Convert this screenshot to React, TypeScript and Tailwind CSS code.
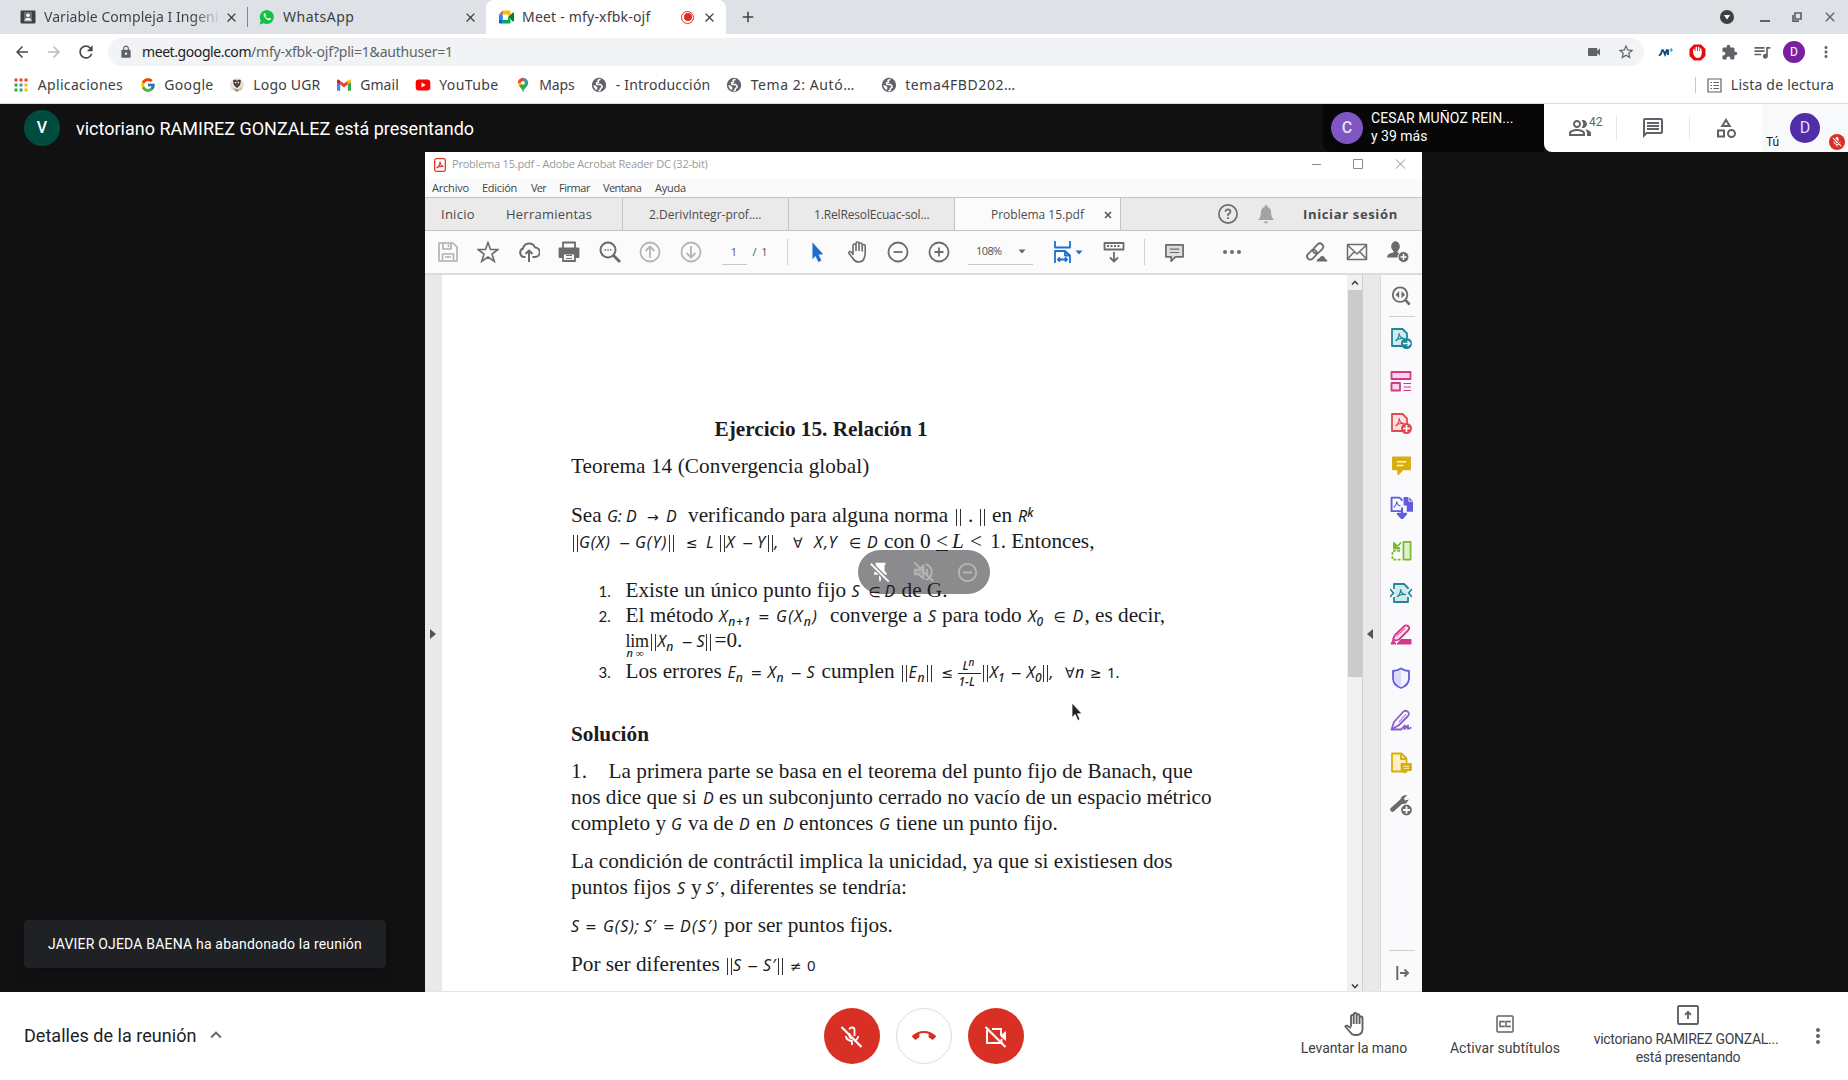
import type { ReactNode } from "react";
import {
  MdAdd, MdArrowBack, MdArrowForward, MdCallEnd, MdClose, MdExpandLess, MdExtension, MdLock, MdMicOff, MdMoreVert,
  MdOutlineCategory, MdOutlineMessage, MdOutlinePeopleAlt, MdQueueMusic, MdRefresh, MdRemoveCircleOutline,
  MdStarBorder, MdVideocam,
} from "react-icons/md";
import { FcGoogle } from "react-icons/fc";

/* ---------- browser icons ---------- */

const Whatsapp = () => (
  <svg width="16" height="16" viewBox="0 0 16 16">
    <path d="M.6 15.4 1.7 11.5A7 7 0 1 1 4.6 14.3Z" fill="#12c143" />
    <path d="M5.3 4.2c-.9.7-1 1.900.1 3.500 1.300 2 3 3.300 4.700 3.600 1 .1 1.900-.8 1.800-1.600L10.200 8.800 9.200 9.800C8 9.300 7 8.300 6.400 7.200L7 6.300 6.300 4.300Z" fill="#fff" />
  </svg>
);
const MeetLogo = () => (
  <svg width="17" height="16" viewBox="0 0 17 16">
    <path d="M1 5.500 4.800 1.500V5.500Z" fill="#ea4335" />
    <path d="M1 5.500H4.800V11H1Z" fill="#2684fc" />
    <path d="M1 11H4.800V14.500H2A1 1 0 0 1 1 13.500Z" fill="#0066da" />
    <path d="M4.800 1.500H11.500A1 1 0 0 1 12.500 2.500V5.500L10 8V5.500H4.800Z" fill="#ffba00" />
    <path d="M4.800 11H10V8L12.500 11V13.500A1 1 0 0 1 11.500 14.500H4.800Z" fill="#00ac47" />
    <path d="M10 8 15 3.500Q16 3 16 4V12Q16 13 15 12.500Z" fill="#00832d" />
  </svg>
);
const Contact = () => (
  <svg width="16" height="16" viewBox="0 0 16 16">
    <rect x=".5" y="1.500" width="15" height="13" rx="1" fill="#3c4043" />
    <rect x="4" y="3" width="8" height="10" fill="#fff" opacity=".25" />
    <circle cx="8" cy="6.300" r="1.800" fill="#fff" />
    <path d="M4.500 11.500Q5 9 8 9T11.500 11.500Z" fill="#fff" />
  </svg>
);
const Apps = () => (
  <svg width="16" height="16" viewBox="0 0 16 16">
    {["#ea4335", "#ea4335", "#ea4335", "#34a853", "#4285f4", "#fbbc04", "#34a853", "#34a853", "#fbbc04"].map((c, i) => (
      <rect key={i} x={1.500 + (i % 3) * 5} y={1.500 + Math.floor(i / 3) * 5} width="3" height="3" fill={c} />
    ))}
  </svg>
);
const Crest = () => (
  <svg width="16" height="16" viewBox="0 0 16 16">
    <circle cx="8" cy="8" r="7" fill="#e6e1da" />
    <path d="M4 3.500 6.500 2.500 8 4 9.500 2.500 12 3.500 11 8 8 11 5 8Z" fill="#3a3130" />
    <circle cx="6.600" cy="5.500" r=".9" fill="#f3ead2" />
    <circle cx="9.400" cy="5.500" r=".9" fill="#f3ead2" />
    <path d="M7.300 7H8.700L8 9Z" fill="#e08a2a" />
    <path d="M4 11 8 15 11 12 8 12.500Z" fill="#8a8f6c" />
    <path d="M11 10 13 11 11 13.500Z" fill="#e3c13a" />
  </svg>
);
const Gmail = () => (
  <svg width="16" height="16" viewBox="0 0 16 16">
    <path d="M1 4V13A.8.8 0 0 0 1.800 13.800H4.200V7Z" fill="#4285f4" />
    <path d="M15 4V13A.8.8 0 0 1 14.200 13.800H11.800V7Z" fill="#34a853" />
    <path d="M4.200 7.500V3.700L8 6.500 11.800 3.700V7.500L8 10.400Z" fill="#ea4335" />
    <path d="M11.800 3.700 13.200 2.700Q15 2 15 4V5.200L11.800 7.600Z" fill="#fbbc04" />
    <path d="M4.200 3.700 2.800 2.700Q1 2 1 4V5.200L4.200 7.600Z" fill="#c5221f" />
  </svg>
);
const Youtube = () => (
  <svg width="16" height="16" viewBox="0 0 16 16">
    <rect x=".7" y="2.500" width="14.600" height="11" rx="3" fill="#f00" />
    <path d="M6.500 5.500V10.500L10.800 8Z" fill="#fff" />
  </svg>
);
const MapsPin = () => (
  <svg width="16" height="16" viewBox="0 0 16 16">
    <path d="M2.800 6A5.200 5.200 0 0 1 8 .8V6Z" fill="#ea4335" />
    <path d="M8 .8A5.200 5.200 0 0 1 13.200 6H8Z" fill="#4285f4" />
    <path d="M13.200 6C13.200 9.500 9 11 8 15.500 7.600 12 5.500 11 4 9L10 3Z" fill="#34a853" />
    <path d="M2.800 6Q3 8 4.200 9.400L8 5Z" fill="#fbbc04" />
    <circle cx="8" cy="5.800" r="1.900" fill="#fff" />
  </svg>
);
const Globe = () => (
  <svg width="16" height="16" viewBox="0 0 16 16">
    <circle cx="8" cy="8" r="7.200" fill="#5f6368" />
    <path d="M9.500 2.300 7 3.500 7.500 5 5.500 6 6 7.500H9.500L11 9V10.500L9.500 11.500 9 13.500 7.500 14" fill="none" stroke="#fff" strokeWidth="1.500" />
    <path d="M2 8.200 4.500 8.500 6.500 10.500 6 13 4 12Z" fill="#fff" />
  </svg>
);

const CHROME = "font-['Noto_Sans',sans-serif] text-[14px] leading-none whitespace-nowrap text-[#3c4043]";

function TabStrip() {
  return (
    <div className={`flex h-[34px] shrink-0 bg-[#dee1e6] ${CHROME}`}>
      <div className="flex w-[247px] items-center pl-5">
        <Contact />
        <span className="ml-2 w-[176px] overflow-hidden bg-gradient-to-r from-[#3c4043] from-85% to-[#dee1e6] bg-clip-text leading-5 tracking-[0.05px] text-transparent">Variable Compleja I Ingeni</span>
        <MdClose className="ml-1 size-[15px]" />
      </div>
      <div className="flex w-[239px] items-center">
        <div className="h-5 w-px bg-[#80868b]" />
        <span className="ml-[11px]"><Whatsapp /></span>
        <span className="ml-2 w-[180px] tracking-[0.5px]">WhatsApp</span>
        <MdClose className="size-[15px]" />
      </div>
      <div className="flex w-[240px] items-center rounded-t-lg bg-white pl-3">
        <MeetLogo />
        <span className="ml-[7px] w-[159px] tracking-[0.2px]">Meet - mfy-xfbk-ojf</span>
        <span className="flex size-[13px] items-center justify-center rounded-full border-[1.5px] border-[#d93025]"><i className="size-2 rounded-full bg-[#d93025]" /></span>
        <MdClose className="ml-[8px] size-[15px]" />
      </div>
      <div className="flex items-center pl-[13px]"><MdAdd className="size-[18px]" /></div>
      <div className="ml-auto flex items-center text-[#5f6368]">
        <svg width="14" height="14" viewBox="0 0 14 14"><circle cx="7" cy="7" r="7" fill="#3c4043" /><path d="M3.800 5H10.200L7 9.500Z" fill="#fff" /></svg>
        <i className="mt-2 ml-[26px] h-0.5 w-[10px] bg-[#5f6368]" />
        <svg className="ml-[22px]" width="10" height="10" viewBox="0 0 10 10" fill="none" stroke="#5f6368" strokeWidth="1.700"><path d="M3 1H9V7H3ZM1 3V9.200H7" /></svg>
        <MdClose className="mr-[10px] ml-[20px] size-4" />
      </div>
    </div>
  );
}

function AddressBar() {
  return (
    <div className={`flex h-9 shrink-0 items-center bg-white pl-[13px] ${CHROME} text-[#5f6368]`}>
      <MdArrowBack className="size-[18px] text-[#46494d]" />
      <MdArrowForward className="ml-[14px] size-[18px] text-[#babcbe]" />
      <MdRefresh className="ml-[13px] size-5 text-[#46494d]" />
      <div className="ml-3 flex h-7 w-[1536px] items-center rounded-full bg-[#f1f3f4] pl-[11px]">
        <MdLock className="size-[14px]" />
        <span className="ml-[9px] w-[109px] tracking-[-0.42px] text-[#202124]">meet.google.com</span>
        <span className="tracking-[-0.2px]">/mfy-xfbk-ojf?pli=1&amp;authuser=1</span>
        <MdVideocam className="ml-auto size-4" />
        <MdStarBorder className="mr-[9px] ml-[15px] size-[18px]" />
      </div>
      <svg className="ml-[14px]" width="15" height="10" viewBox="0 0 15 10" fill="none" stroke="#0b4a80" strokeWidth="1.900"><path d="M1 7.500Q2.500 9 3.500 5T6 5L7 7.500 9 3Q10.500 2 10 8" /><path d="M11.500 3H15M13.200 1.200V4.800" stroke="#1b9ad6" strokeWidth="1.100" /></svg>
      <svg className="ml-[16px]" width="17" height="17" viewBox="0 0 17 17"><path d="M5 .5H12L16.500 5V12L12 16.500H5L.5 12V5Z" fill="#e40d0d" /><path d="M5 8V5.500M7.300 8V3.500M9.600 8V3.500M11.800 9V5" stroke="#fff" strokeWidth="1.500" strokeLinecap="round" /><path d="M4.300 7H12.500V10.500Q12 14 8.500 14 6 14 4.300 10Z" fill="#fff" /></svg>
      <MdExtension className="ml-[15px] size-[17px]" />
      <MdQueueMusic className="ml-[14px] size-5" />
      <span className="ml-[11px] flex size-[22px] items-center justify-center rounded-full bg-[#7b1fa2] font-[Roboto] text-[12px] text-white">D</span>
      <MdMoreVert className="ml-[12px] size-[18px]" />
    </div>
  );
}

function Bookmark({ icon, children, className }: { icon: ReactNode; children: ReactNode; className: string }) {
  return (
    <div className={`flex shrink-0 items-center gap-[8.5px] ${className}`}>
      {icon}
      <span>{children}</span>
    </div>
  );
}

function BookmarksBar() {
  return (
    <div className={`flex h-[34px] shrink-0 items-center border-b border-[#dadce0] bg-white pb-[3px] pl-[13.25px] ${CHROME}`}>
      <Bookmark icon={<Apps />} className="w-[126.5px] tracking-[0.33px]">Aplicaciones</Bookmark>
      <Bookmark icon={<FcGoogle className="size-4" />} className="w-[89px] tracking-[0.35px]">Google</Bookmark>
      <Bookmark icon={<Crest />} className="w-[107px] tracking-[0.19px]">Logo UGR</Bookmark>
      <Bookmark icon={<Gmail />} className="w-[79px] tracking-[0.04px]">Gmail</Bookmark>
      <Bookmark icon={<Youtube />} className="w-[100px] tracking-[0.4px]">YouTube</Bookmark>
      <Bookmark icon={<MapsPin />} className="w-[76.5px] tracking-[-0.12px]">Maps</Bookmark>
      <Bookmark icon={<Globe />} className="w-[135px] tracking-[0.19px]">- Introducción</Bookmark>
      <Bookmark icon={<Globe />} className="w-[154.5px] tracking-[0.55px]">Tema 2: Autó…</Bookmark>
      <Bookmark icon={<Globe />} className="w-[135px] tracking-[0.58px]">tema4FBD202…</Bookmark>
      <div className="mr-[14px] ml-auto flex items-center">
        <div className="h-4 w-px bg-[#c4c7cb]" />
        <svg className="ml-[11px]" width="15" height="15" viewBox="0 0 15 15" fill="none" stroke="#5f6368" strokeWidth="1.200"><path d="M1 1H14V14H1ZM3.500 4.500H5M6.500 4.500H12M3.500 7.500H5M6.500 7.500H12M3.500 10.500H5M6.500 10.500H12" /></svg>
        <span className="ml-[9px] tracking-[0.22px]">Lista de lectura</span>
      </div>
    </div>
  );
}

/* ---------- Acrobat icons ---------- */

function Ico({ children, size = 22, color = "#6b6b6b", w = 1.800 }: { children: ReactNode; size?: number; color?: string; w?: number }) {
  return (
    <svg width={size} height={size} viewBox="0 0 22 22" fill="none" stroke={color} strokeWidth={w} strokeLinejoin="round">
      {children}
    </svg>
  );
}
const AcroMark = ({ c }: { c: string }) => <path d="M5.500 14Q9 11.500 9.200 6.500 9.500 10.500 14 11.700 9 10.700 5.500 14" stroke={c} strokeWidth="1.200" />;
const CaretDown = ({ className }: { className: string }) => (
  <svg className={className} width="8" height="5" viewBox="0 0 8 5"><path d="M.5.5H7.500L4 4.500Z" fill="currentColor" /></svg>
);

function AcrobatToolbar() {
  const cell = "flex w-[40.5px] shrink-0 justify-center";
  return (
    <div className="flex h-[44px] items-center border-b-2 border-[#dcdcdc] bg-[#fbfbfc] pl-[2.5px] font-['Open_Sans',sans-serif] text-[11px] text-[#555]">
      <div className={cell}><Ico color="#b0b0b0" w={1.600}><path d="M2 2H16L20 6V20H2ZM6 2V8H14V2M5.500 20V13H16.500V20M8 16H14M11.500 3.500V6" /></Ico></div>
      <div className={cell}><Ico w={1.600}><path d="M11 1.500 13.500 8.500H21L15 13 17.300 20.300 11 16 4.700 20.300 7 13 1 8.500H8.500Z" strokeLinejoin="miter" /></Ico></div>
      <div className={cell}><Ico w={2}><path d="M7.500 16H5.500A4.500 4.500 0 0 1 5 7.500 6.300 6.300 0 0 1 17 6.500 4.700 4.700 0 0 1 17 16H14.500M11 21V10M7.500 13 11 9.500 14.500 13" /></Ico></div>
      <div className={cell}><Ico><path d="M5 7V1.500H17V7" /><path d="M1.500 7.500H20.500V16H1.500Z" fill="#6b6b6b" /><path d="M5 12.500H17V20H5Z" fill="#fbfbfc" /><path d="M8 14.500H14M8 17.500H14" strokeWidth="1.200" /></Ico></div>
      <div className={cell}><Ico w={2}><circle cx="9" cy="9" r="7.500" /><path d="M14.500 14.500 21 21" strokeWidth="2.800" /><path d="M5.500 9H7M8.300 9H9.800M11 9H12.500" strokeWidth="1.600" /></Ico></div>
      <div className={cell}><Ico color="#b5b5b5"><circle cx="11" cy="11" r="9.500" /><path d="M11 17V6M6.500 10 11 5.500 15.500 10" /></Ico></div>
      <div className={cell}><Ico color="#b5b5b5"><circle cx="11" cy="11" r="9.500" /><path d="M11 5V16M6.500 12 11 16.500 15.500 12" /></Ico></div>
      <div className="ml-[10.5px] h-[25px] w-[25px] shrink-0 border-b border-[#c8c8c8] text-center leading-[24px]">1</div>
      <div className="ml-[6px] w-4 shrink-0 whitespace-nowrap tracking-[0.9px]">/ 1</div>
      <div className="ml-[18px] h-[26px] w-px shrink-0 bg-[#cfcfcf]" />
      <div className={`ml-[9.5px] ${cell}`}><Ico size={21} color="#1d6fcf" w={0.500}><path d="M6 1 16.500 12.500 11.800 13 14.800 19.300 12 20.700 9 14.300 6 17.500Z" fill="#1d6fcf" /></Ico></div>
      <div className={cell}><Ico w={1.600}><path d="M6 14V4.500Q6 3 7.500 3T9 4.500V10M9 4V2.500Q9 1 10.500 1T12 2.500V10M12 3.500Q12 2 13.500 2T15.200 3.500V10.500M15.200 5Q15.300 3.500 16.700 3.500T18.200 5V11Q18.200 14 17.500 16 16.500 21 11.500 21 8 21 6 17.500L2 12.500Q1.500 11 3 10.500T6 13.500" /></Ico></div>
      <div className={cell}><Ico><circle cx="11" cy="11" r="9.500" /><path d="M6.500 11H15.500" /></Ico></div>
      <div className={cell}><Ico><circle cx="11" cy="11" r="9.500" /><path d="M6.500 11H15.500M11 6.500V15.500" /></Ico></div>
      <div className="ml-[9px] flex h-[25px] w-[65px] shrink-0 items-center justify-between border-b border-[#c8c8c8] pr-[7px] pl-[8px]">
        <span className="tracking-[-0.6px]">108%</span>
        <CaretDown className="text-[#666]" />
      </div>
      <div className="ml-[19.500px] shrink-0"><Ico size={22} color="#1d6fcf" w={2}><path d="M2 0V6.500H17V0M2 22V10H12L17 14.500V22M12 10V14.500H17M5 18.500H14M7 16.500 5 18.500 7 20.500M12 16.500 14 18.500 12 20.500" strokeWidth="1.800" /></Ico></div>
      <CaretDown className="shrink-0 text-[#1d6fcf]" />
      <div className={`ml-[11px] ${cell}`}><Ico><path d="M1.500 2H20.500V8.500H1.500Z" /><path d="M4 5H18" strokeDasharray="2 1.500" /><path d="M11 11V20M7 16.500 11 20.500 15 16.500" /></Ico></div>
      <div className="ml-[9.500px] h-[26px] w-px shrink-0 bg-[#cfcfcf]" />
      <div className={`ml-[9.500px] ${cell}`}><Ico size={21}><path d="M2 3H20V15.500H12L7.500 20V15.500H2Z" fill="#dedede" /><path d="M6 7.500H16M6 11H16" strokeWidth="1.200" /></Ico></div>
      <div className={`ml-[17.500px] ${cell}`}><Ico color="none"><g fill="#6b6b6b"><circle cx="4" cy="11" r="2" /><circle cx="11" cy="11" r="2" /><circle cx="18" cy="11" r="2" /></g></Ico></div>
      <div className={`ml-auto ${cell}`}><Ico w={1.800}><g transform="rotate(-45 10 10)"><rect x="-1" y="6.500" width="11" height="6.500" rx="3.200" /><rect x="7.500" y="6.500" width="11.500" height="6.500" rx="3.200" /></g><path d="M10 21Q10 17 13 17 14 14 17 14.500 19 15 19.500 17.500 22 18 22 21Z" fill="#6b6b6b" stroke="#fbfbfc" strokeWidth="1" /></Ico></div>
      <div className={cell}><Ico><path d="M1.500 3.500H20.500V18.500H1.500ZM1.500 4 11 13 20.500 4M1.500 18 8.500 10.500M20.500 18 13.500 10.500" strokeWidth="1.500" /></Ico></div>
      <div className={`${cell} mr-1`}><Ico w={1}><ellipse cx="8.500" cy="5.500" rx="3.800" ry="4.800" fill="#6b6b6b" /><path d="M0 16.500Q0 12.500 6.500 11.500L6.500 9H10.500V11.500Q14 12.500 14 15L12 16.500Z" fill="#6b6b6b" stroke="none" /><circle cx="16.500" cy="16" r="5.500" fill="#6b6b6b" stroke="#fbfbfc" /><path d="M13.500 16H19.500M16.500 13V19" stroke="#fff" strokeWidth="1.500" /></Ico></div>
    </div>
  );
}

function AcrobatTabs() {
  const tab = "flex h-full shrink-0 items-center border-r border-[#c4c4c4] pt-px text-[12px] whitespace-nowrap";
  return (
    <div className="flex h-[34px] items-center border-y border-[#c4c4c4] bg-[#eaeaea] text-[13px] text-[#4b4b4b]">
      <span className="mt-px ml-4 w-[65px] tracking-[0.26px]">Inicio</span>
      <div className="flex h-full w-[117px] items-center border-r border-[#c4c4c4] pt-px tracking-[0.24px]">Herramientas</div>
      <div className={`${tab} w-[166px] pl-[26px]`}>2.DerivIntegr-prof....</div>
      <div className={`${tab} w-[166px] pl-[25px] tracking-[-0.15px]`}>1.RelResolEcuac-sol...</div>
      <div className={`${tab} w-[166px] bg-[#fbfbfc] pl-[36px]`}>
        Problema 15.pdf
        <svg className="ml-[20px]" width="8" height="8" viewBox="0 0 8 8" stroke="#555" strokeWidth="1.600"><path d="M1 1 7 7M7 1 1 7" /></svg>
      </div>
      <div className="mr-6 ml-auto flex items-center">
        <Ico size={20}><circle cx="11" cy="11" r="10" /><path d="M8.300 8.500Q8.500 6 11 6T13.700 8.500Q13.700 10 11 11.500V13M11 14.500V16.500" strokeWidth="2" /></Ico>
        <svg className="ml-[20px]" width="16" height="19" viewBox="0 0 16 19" fill="#a3a3a3"><path d="M8 0Q9.500 0 9.500 2 13 3 13 7 13 12 16 15H0Q3 12 3 7 3 3 6.500 2 6.500 0 8 0ZM6 16.500H10Q10 18.500 8 18.500T6 16.500Z" /></svg>
        <span className="mt-px ml-[29.5px] w-[95px] font-bold tracking-[0.65px] whitespace-nowrap">Iniciar sesión</span>
      </div>
    </div>
  );
}

/* ---------- PDF page ---------- */

const Row = ({ className, children }: { className: string; children: ReactNode }) => (
  <div className={`flex items-baseline leading-[26px] whitespace-pre ${className}`}>{children}</div>
);
const M = ({ className = "", children }: { className?: string; children: ReactNode }) => (
  <span className={`shrink-0 font-['Noto_Sans',sans-serif] text-[16px] italic ${className}`}>{children}</span>
);
const S = ({ className = "", children }: { className?: string; children: ReactNode }) => (
  <span className={`shrink-0 font-['DejaVu_Sans',sans-serif] text-[14px] ${className}`}>{children}</span>
);
const T = ({ className = "", children }: { className?: string; children: ReactNode }) => <span className={`shrink-0 ${className}`}>{children}</span>;
const Sub = ({ children }: { children: ReactNode }) => (
  <span className="align-[-4px] text-[12px] leading-[0] font-medium">{children}</span>
);
const Bars = () => <span className="mx-[1.5px] inline-block h-[17px] w-[5px] border-x border-[#333] align-[-4px]" />;
const Num = ({ children }: { children: ReactNode }) => <span className="w-[27px] shrink-0 font-[Lato] text-[15px]">{children}</span>;

function PdfPage() {
  return (
    <div className="flex w-[905px] flex-col bg-white pt-[141px] pl-[129px] font-['Liberation_Serif',serif] text-[21.25px] text-[#1c1c1c]">
      <Row className="h-[37px] pl-[143.5px] font-bold"><T>Ejercicio 15. Relación 1</T></Row>
      <Row className="h-[49px]"><T className="tracking-[0.07px]">Teorema 14 (Convergencia global)</T></Row>
      <Row className="h-[26px]">
        <T className="w-[36px]">Sea</T><M className="w-[19px]">G:</M><M className="w-[21px]">D</M><S className="w-[19px]">→</S><M className="w-[22px]">D</M>
        <T className="w-[266px]">verificando para alguna norma</T>
        <S className="w-[14px]"><Bars /></S><T className="w-[10px]">.</T><S className="w-[14px]"><Bars /></S>
        <T className="w-[26px]">en</T><M>R<span className="align-[5px] text-[12px] leading-[0] font-medium">k</span></M>
      </Row>
      <Row className="h-[49px]">
        <M className="w-[48px] tracking-[0.8px]"><Bars />G(X)</M><S className="w-[16px]">−</S><M className="w-[51px] tracking-[1px]">G(Y)<Bars /></M>
        <S className="w-[20px]">≤</S><M className="w-[12px]">L</M><M className="w-[24px]"><Bars />X</M><S className="w-[15px]">−</S><M className="w-[36px] tracking-[1px]">Y<Bars />,</M>
        <S className="w-[21px]">∀</S><M className="w-[35px] tracking-[1.5px]">X,Y</M><S className="w-[18px]">∈</S><M className="w-[17px]">D</M>
        <T className="w-[52px]">con 0</T><T className="w-[16px] underline decoration-1 underline-offset-2">&lt;</T><T className="w-[18px] italic">L</T><T className="w-[20px]">&lt;</T><T>1. Entonces,</T>
      </Row>
      <Row className="h-[25px] pl-[27.5px]">
        <Num>1.</Num><T className="w-[226px]">Existe un único punto fijo</T><M className="w-[17px]">S</M><S className="w-[16px]">∈</S><M className="w-[17px]">D</M><T>de G.</T>
      </Row>
      <Row className="h-[25px] pl-[27.5px]">
        <Num>2.</Num><T className="w-[93.5px]">El método</T><M className="w-[39px] tracking-[0.8px]">X<Sub>n+1</Sub></M><S className="w-[18px]">=</S>
        <M className="w-[54px] tracking-[1.3px]">G(X<Sub>n</Sub>)</M><T className="w-[98px]">converge a</T><M className="w-[14px]">S</M><T className="w-[86px]">para todo</T>
        <M className="w-[25.5px]">X<Sub>0</Sub></M><S className="w-[19px]">∈</S><M className="w-[12px]">D</M><T className="w-[10.500px]">,</T><T>es decir,</T>
      </Row>
      <Row className="h-[31px] pl-[54.5px]">
        <span className="flex h-[26px] w-[24px] shrink-0 flex-col">
          <span className="text-[18px] leading-[16px] tracking-[-0.3px]">lim</span>
          <span className="pl-px font-['Noto_Sans'] text-[11px] leading-[8px] font-medium italic">n ∞</span>
        </span>
        <M className="w-[32px] tracking-[0.4px]"><Bars />X<Sub>n</Sub></M><S className="w-[15px]">−</S><M className="w-[18px]">S<Bars /></M><T>=0.</T>
      </Row>
      <Row className="h-[63px] pl-[27.5px]">
        <Num>3.</Num><T className="w-[102px]">Los errores</T><M className="w-[23px]">E<Sub>n</Sub></M><S className="w-[17px]">=</S><M className="w-[23px] tracking-[0.5px]">X<Sub>n</Sub></M><S className="w-[16px]">−</S>
        <M className="w-[15px]">S</M><T className="w-[79px]">cumplen</T><M className="w-[41px] tracking-[0.8px]"><Bars />E<Sub>n</Sub><Bars /></M><S className="w-[16px]">≤</S>
        <span className="relative h-0 w-[24px] shrink-0 font-['Noto_Sans'] text-[12px] leading-none font-medium italic">
          <span className="absolute -top-[21px] left-[5px]">L<span className="align-[4px] text-[10px] leading-none">n</span></span>
          <span className="absolute -top-[5px] left-0 h-px w-[23px] bg-[#222]" />
          <span className="absolute -top-[2px] left-[1px]">1−L</span>
        </span>
        <M className="w-[29px]"><Bars />X<Sub>1</Sub></M><S className="w-[16px]">−</S><M className="w-[38.5px]">X<Sub>0</Sub><Bars />,</M>
        <S className="w-[10px]">∀</S><M className="w-[15px]">n</M><S className="w-[17px]">≥</S><T className="font-['Noto_Sans'] text-[15px]">1.</T>
      </Row>
      <Row className="h-[37px] font-bold"><T>Solución</T></Row>
      <Row className="h-[26px]"><T className="w-[37.5px]">1.</T><T className="tracking-[0.02px]">La primera parte se basa en el teorema del punto fijo de Banach, que</T></Row>
      <Row className="h-[26px]"><T className="w-[132px]">nos dice que si</T><M className="w-[16px]">D</M><T className="tracking-[0.02px]">es un subconjunto cerrado no vacío de un espacio métrico</T></Row>
      <Row className="h-[38px]">
        <T className="w-[100px]">completo y</T><M className="w-[17px]">G</M><T className="w-[51px]">va de</T><M className="w-[17px]">D</M><T className="w-[27px]">en</T><M className="w-[16px]">D</M><T className="w-[80px]">entonces</T><M className="w-[17px]">G</M><T>tiene un punto fijo.</T>
      </Row>
      <Row className="h-[26px]"><T className="tracking-[0.01px]">La condición de contráctil implica la unicidad, ya que si existiesen dos</T></Row>
      <Row className="h-[38px]"><T className="w-[106px]">puntos fijos</T><M className="w-[14px]">S</M><T className="w-[15px]">y</T><M className="w-[14px]">S′</M><T className="w-[10px]">,</T><T>diferentes se tendría:</T></Row>
      <Row className="h-[39px]">
        <M className="w-[14px]">S</M><S className="w-[18px]">=</S><M className="w-[41px] tracking-[0.9px]">G(S);</M><M className="w-[19px]">S′</M><S className="w-[17px]">=</S><M className="w-[44px] tracking-[1.400px]">D(S′)</M><T>por ser puntos fijos.</T>
      </Row>
      <Row className="h-[26px]">
        <T className="w-[154px]">Por ser diferentes</T><M className="w-[22px]"><Bars />S</M><S className="w-[16px]">−</S><M className="w-[27px] tracking-[0.8px]">S′<Bars /></M><S className="w-[17px]">≠</S><T className="font-['Noto_Sans'] text-[15px]">0</T>
      </Row>
    </div>
  );
}

function ToolPanel() {
  const cell = "flex h-[42.45px] shrink-0 items-center justify-center pr-px";
  const teal = "#1d8797", pink = "#d13a87", red = "#e34850", gold = "#d7ae10", blue = "#5f5ce0", green = "#78bb2e", violet = "#8c5fd0", grey = "#6b6b6b";
  return (
    <div className="flex w-[42px] flex-col border-l border-[#d8d8d8] bg-[#fafafc]">
      <div className="flex h-[41px] shrink-0 items-center justify-center pr-px"><Ico size={20} w={2}><circle cx="10" cy="9.500" r="8" /><path d="M15.500 15 20.500 20.500" strokeWidth="3" /><path d="M9 5.500V13.500L5 9.500ZM11.500 5.500V13.500L15.500 9.500Z" fill={grey} stroke="none" /></Ico></div>
      <div className="mx-auto h-px w-[26px] shrink-0 bg-[#cfcfcf]" />
      <div className={cell}><Ico color={teal}><path d="M2 2H12.500L17 6.500V19H2Z" fill="#d3eaed" /><AcroMark c={teal} /><circle cx="16.500" cy="16.500" r="5.500" fill={teal} stroke="none" /><path d="M13 16.500H19.500M17.500 14 20 16.500 17.500 19" stroke="#fff" strokeWidth="1.400" /></Ico></div>
      <div className={cell}><Ico color={pink}><path d="M1.500 2H20.500V9H1.500ZM1.500 13H10V20.500H1.500Z" fill="#f9d3e7" /><path d="M13.500 13.500H21M13.500 17H21M13.500 20.500H21" strokeWidth="1.200" /></Ico></div>
      <div className={cell}><Ico color={red}><path d="M2 2H12.500L17 6.500V19H2Z" fill="#fde0e0" /><AcroMark c={red} /><circle cx="16.500" cy="16.500" r="5.500" fill={red} stroke="none" /><path d="M13 16.500H20M16.500 13V20" stroke="#fff" strokeWidth="1.600" /></Ico></div>
      <div className={cell}><Ico size={21} color={gold}><path d="M2 2.500H20V15H12.500L7.500 20V15H2Z" fill={gold} /><path d="M6 7H16M6 11H13" stroke="#fff3bf" strokeWidth="1.500" /></Ico></div>
      <div className={cell}><Ico size={23} color={blue}><path d="M12 14.500H1.500V1.500H9L12 4.500" /><path d="M3.500 11Q6 9 6.500 5.500 7 9 10 9.500" strokeWidth="1.100" /><path d="M13 1H18L22 5V15H16V9H13Z" fill={blue} stroke="none" /><path d="M18 1V5H22" stroke="#fff" strokeWidth=".8" /><path d="M11.500 11V20M7.500 17H15.500L11.500 21.500Z" fill={blue} strokeWidth="2" /></Ico></div>
      <div className={cell}><Ico size={21} color={green}><path d="M13 2H20.500V20.500H13Z" fill="#dff1ca" /><path d="M10 20.500H1.500V11.500H11" strokeDasharray="3 1.500" /><path d="M10.500 2.500Q9 5 6 6.500M3 3V9H9Z" fill={green} /></Ico></div>
      <div className={cell}><Ico color={teal}><path d="M4.500 2.500H14L17.500 6V19.500H4.500Z" fill="#d3eaed" stroke="none" /><path d="M4 7V2H14L18 6V7M18 15V20H4V15" /><path d="M0 7 3.500 11 0 15M22 7 18.500 11 22 15" /><g transform="translate(1.500 1)"><AcroMark c={teal} /></g></Ico></div>
      <div className={cell}><Ico color={pink}><path d="M3 15 5 11 15 1.500Q17 1 18.500 2.500T18.500 6L9 15.500 5.500 16.500Z" fill="#fbe0ee" /><path d="M6.500 12 15 4.500" strokeWidth="1" /><path d="M11 15.500H21V20H7ZM1 20 3 16 6 20Z" fill={pink} strokeWidth="1" /></Ico></div>
      <div className={cell}><Ico color={blue}><path d="M11 1.500Q15 4 19 4V11Q19 18 11 21 3 18 3 11V4Q7 4 11 1.500Z" fill="#f4f4ff" /><path d="M11 3Q7.500 5 4 5V11Q4 17 11 19.500Z" fill="#dadaf8" stroke="none" /></Ico></div>
      <div className={cell}><Ico color={violet}><path d="M1.500 20.500 4 13 13 3Q15 .8 17.500 2.500T18 7L9 16 1.500 20.500ZM1.500 20.500H11L15 16.500 14.500 20 18 16.500V20L21.500 18.500" /><path d="M9 13 16 5" strokeWidth="1" /></Ico></div>
      <div className={cell}><Ico color={gold}><path d="M2 1.500H11.500L16.500 6.500V19.500H2Z" fill="#fbf0c4" /><path d="M11 2V7H16" /><path d="M11.500 12H21V18H17L14.500 20.500V18H11.500Z" fill={gold} /><path d="M13.500 14.200H19M13.500 16.300H19" stroke="#fff3bf" strokeWidth=".9" /></Ico></div>
      <div className={cell}><Ico color={grey}><path d="M2.500 15.500 12 7" strokeWidth="4.500" strokeLinecap="round" /><path d="M17.500 1.500Q11 .5 10.500 6T16 9.500L19 5.500 15 6.500 14 4Z" fill={grey} stroke="none" /><circle cx="16.500" cy="16" r="6" fill={grey} stroke="#fafafc" strokeWidth="1.200" /><path d="M13 16H20M16.500 12.500V19.500" stroke="#fff" /></Ico></div>
      <div className="mx-auto mt-auto h-px w-[26px] shrink-0 bg-[#cfcfcf]" />
      <div className="flex h-[40px] shrink-0 items-center justify-center pt-[3px] pl-[3px]"><svg width="14" height="14" viewBox="0 0 14 14" fill="none" stroke={grey} strokeWidth="2"><path d="M1.300 0V14M4 7H12M8.500 3.500 12 7 8.500 10.500" /></svg></div>
    </div>
  );
}

function AcrobatWindow() {
  return (
    <div className="relative ml-[425px] flex h-[840px] w-[997px] flex-col bg-white font-['Open_Sans',sans-serif]">
      <div className="flex h-[27px] shrink-0 items-center pb-0.5 pl-[9px] text-[11px] text-[#999]">
        <svg width="12" height="14" viewBox="0 0 12 14"><rect x=".7" y=".7" width="10.600" height="12.600" rx="1.500" fill="#fff" stroke="#e2382c" strokeWidth="1.300" /><path d="M2.500 10Q6 8 6 3.500 6.200 7.500 9.500 8.500 5.500 8 2.500 10" fill="none" stroke="#e2382c" strokeWidth="1.200" /></svg>
        <span className="ml-[6px] tracking-[-0.22px] whitespace-nowrap">Problema 15.pdf - Adobe Acrobat Reader DC (32-bit)</span>
        <svg className="mr-[16px] mb-px ml-auto" width="95" height="12" viewBox="0 0 95 12" fill="none" stroke="#8c8c8c"><path d="M1 6.500H10M42.500 1.500H51.500V10.500H42.500ZM85 1.500 94 10.500M94 1.500 85 10.500" /></svg>
      </div>
      <div className="flex h-[18px] shrink-0 items-center bg-[#fafafa] text-[11px] text-[#444]">
        <span className="ml-[7px] w-[50px] tracking-[-0.2px]">Archivo</span>
        <span className="w-[49px] tracking-[-0.29px]">Edición</span>
        <span className="w-[28px] tracking-[-0.7px]">Ver</span>
        <span className="w-[44px] tracking-[-0.45px]">Firmar</span>
        <span className="w-[52px] tracking-[-0.6px]">Ventana</span>
        <span className="tracking-[-0.26px]">Ayuda</span>
      </div>
      <AcrobatTabs />
      <AcrobatToolbar />
      <div className="flex min-h-0 flex-1 overflow-hidden border-b border-[#e4e4e4]">
        <div className="flex w-[17px] items-center justify-center bg-[#e9e9e9] pt-[2px] pr-px"><svg width="6" height="10" viewBox="0 0 6 10" fill="#555"><path d="M0 0 6 5 0 10Z" /></svg></div>
        <PdfPage />
        <div className="flex w-[15px] flex-col items-center bg-[#f0f0f2]">
          <svg className="my-[5px]" width="8" height="5" viewBox="0 0 8 5" fill="none" stroke="#444" strokeWidth="1.600"><path d="M1 4.500 4 1.500 7 4.500" /></svg>
          <div className="h-[387px] w-[14px] bg-[#cbcbcb]" />
          <svg className="mt-auto mb-[2px]" width="8" height="5" viewBox="0 0 8 5" fill="none" stroke="#444" strokeWidth="1.600"><path d="M1 .5 4 3.500 7 .5" /></svg>
        </div>
        <div className="flex w-[18px] items-center justify-center border-l border-[#cfcfcf] bg-[#e9e9ea] pt-[2px] pr-[3px]"><svg width="6" height="10" viewBox="0 0 6 10" fill="#555"><path d="M6 0 0 5 6 10Z" /></svg></div>
        <ToolPanel />
      </div>

      {/* hover controls over the shared screen */}
      <div className="absolute top-[398px] left-[433px] flex h-[44px] w-[132px] items-center rounded-full bg-[#202124]/52 pl-[11px]">
        <svg width="22" height="22" viewBox="0 0 24 24" fill="#fff"><path d="M7 2H18V4H17V10.500L19.500 13.500V15H13V21L12 23 11 21V15H5.500V13L7.500 10.500V5Z" /><path d="M1 2 21 22" stroke="#8b8b8c" strokeWidth="5" /><path d="M2 3 21.500 22.500" stroke="#fff" strokeWidth="2" /></svg>
        <svg className="ml-[21px]" width="22" height="22" viewBox="0 0 24 24" fill="none" stroke="#b5b5b6" strokeWidth="2"><path d="M3 9.500H7L12.500 5V19L7 14.500H3Z" fill="#b5b5b6" fillOpacity=".5" /><path d="M15.500 8.500Q18 12 15.500 15.500M15 3.500Q21.500 6 21.500 12T15 20.500" /><path d="M2.500 1.500 23 22" strokeWidth="2.200" /></svg>
        <MdRemoveCircleOutline className="ml-[22px] size-[23px] text-[#b5b5b6]" />
      </div>
      <svg className="absolute top-[550px] left-[646px]" width="13" height="20" viewBox="0 0 13 20"><path d="M1 1V15.500L4.200 12.500 6.800 18.500 9 17.500 6.500 11.800H11Z" fill="#222" stroke="#fff" strokeWidth=".8" /></svg>
    </div>
  );
}

/* ---------- Meet ---------- */

function MeetHeader() {
  return (
    <div className="flex h-12 shrink-0 items-center pl-6 font-[Roboto] text-white">
      <span className="flex size-9 items-center justify-center rounded-full bg-[#004d40] text-[16px] font-medium">V</span>
      <span className="ml-4 text-[18px] leading-[25px] whitespace-nowrap">victoriano RAMIREZ GONZALEZ está presentando</span>
      <div className="ml-auto flex h-full w-[221px] items-center rounded-bl-lg bg-[#070707] pl-2">
        <span className="flex size-8 items-center justify-center rounded-full bg-[#7e57c2] text-[16px] font-medium text-[#e8e0f5]">C</span>
        <div className="mb-[2px] ml-2 text-[14px] leading-[18px] whitespace-nowrap">
          <div className="tracking-[0.1px]">CESAR MUÑOZ REIN...</div>
          <div>y 39 más</div>
        </div>
      </div>
      <div className="flex h-full w-[304px] overflow-hidden rounded-bl-lg bg-white text-[#5f6368]">
        <div className="flex w-[72px] items-center pl-[24px]">
          <MdOutlinePeopleAlt className="size-6 shrink-0" />
          <span className="-ml-[3px] self-start pt-[12px] text-[12px] leading-none">42</span>
        </div>
        <div className="flex w-[73px] items-center">
          <div className="h-6 w-px bg-[#e4e6e8]" />
          <MdOutlineMessage className="mx-auto size-6" />
        </div>
        <div className="flex w-[73px] items-center">
          <div className="h-6 w-px bg-[#e4e6e8]" />
          <MdOutlineCategory className="mx-auto size-6" />
        </div>
        <div className="relative flex-1 bg-[#f8f9fa]">
          <span className="absolute bottom-[4px] left-[4px] text-[12px] leading-none text-[#202124]">Tú</span>
          <span className="absolute top-[9px] left-[28px] flex size-[30px] items-center justify-center rounded-full bg-[#512da8] text-[16px] text-[#e4dcf5]">D</span>
          <span className="absolute top-[30px] left-[67px] flex size-4 items-center justify-center rounded-full bg-[#d93025] text-white"><MdMicOff className="size-3" /></span>
        </div>
      </div>
    </div>
  );
}

function CallBar() {
  const label = "text-[14px] leading-[18px] text-[#3c4043] whitespace-nowrap";
  return (
    <div className="flex h-[88px] shrink-0 bg-white font-[Roboto]">
      <div className="flex w-[824px] items-center pb-[2px] pl-[24px] text-[18px] tracking-[0.03px] text-[#202124]">
        Detalles de la reunión
        <MdExpandLess className="ml-[9px] size-[22px] text-[#5f6368]" />
      </div>
      <div className="flex w-[200px] items-center justify-center gap-4">
        <span className="flex size-14 shrink-0 items-center justify-center rounded-full bg-[#d93025]">
          <svg width="24" height="24" viewBox="0 0 24 24" fill="none" stroke="#fff" strokeWidth="1.800"><path d="M9.500 5.500Q9.500 3.500 12 3.500T14.500 6V12M9.500 9V12Q9.500 14 12 14.200M5.800 12Q6.500 16.500 12 17V21M15.500 16.300Q18 15 18.300 12" /><path d="M1.500 3 21.500 23" strokeWidth="2.200" /></svg>
        </span>
        <span className="flex size-14 shrink-0 items-center justify-center rounded-full border border-[#dadce0] text-[#d93025]"><MdCallEnd className="size-6" /></span>
        <span className="flex size-14 shrink-0 items-center justify-center rounded-full bg-[#d93025]">
          <svg width="24" height="24" viewBox="0 0 24 24" fill="none" stroke="#fff" strokeWidth="1.900"><path d="M8 5H17V12M3 6V19H17.500V15" /><path d="M17 11 22 7V17L17 13Z" fill="#fff" stroke="none" /><path d="M1.500 3 21.500 23" strokeWidth="2.200" /></svg>
        </span>
      </div>
      <div className="ml-auto flex w-[150px] flex-col items-center pt-[19px] text-[#5f6368]">
        <svg className="ml-[2px]" width="24" height="26" viewBox="0 0 24 26" fill="none" stroke="#5f6368" strokeWidth="1.900" strokeLinejoin="round"><path d="M8 15.500V5.500Q8 4 9.300 4T10.700 5.500V13M10.700 5V3.300Q10.700 2 12.100 2T13.600 3.300V13M13.600 4.500Q13.600 3.300 15 3.300T16.500 4.500V13M16.500 7Q16.500 5.500 18 5.500T19.500 7V18Q19.500 23.500 14 24H11.500Q9 24 7.500 21.500L2.300 15.500Q3 14.500 4.300 14.800L8 17" /></svg>
        <span className={`${label} mt-[2px] tracking-[-0.06px]`}>Levantar la mano</span>
      </div>
      <div className="flex w-[152px] flex-col items-center pt-[23px] text-[#5f6368]">
        <svg width="18" height="18" viewBox="0 0 18 18" fill="none" stroke="#5f6368" strokeWidth="1.500"><rect x="1" y="1" width="16" height="16" rx="1" /><path d="M8 7.500V6.500H4V11.500H8V10.500M14 7.500V6.500H10V11.500H14V10.500" /></svg>
        <span className={`${label} mt-[6px] tracking-[0.08px]`}>Activar subtítulos</span>
      </div>
      <div className="flex w-[214px] flex-col items-center pt-[13px] text-[#5f6368]">
        <svg width="22" height="20" viewBox="0 0 22 20" fill="none" stroke="#5f6368" strokeWidth="1.900"><rect x="1" y="1" width="20" height="18" rx="1" /><path d="M11 14V8M8 9.800 11 6.800 14 9.800" /></svg>
        <span className={`${label} mt-[5px] mr-1 tracking-[-0.28px]`}>victoriano RAMIREZ GONZAL...</span>
        <span className={`${label} tracking-[-0.23px]`}>está presentando</span>
      </div>
      <div className="flex w-[53px] items-center pl-[11px] text-[#5f6368]"><MdMoreVert className="size-6" /></div>
    </div>
  );
}

export default function App() {
  return (
    <div className="flex h-[1080px] w-[1848px] flex-col overflow-hidden bg-[#111]">
      <TabStrip />
      <AddressBar />
      <BookmarksBar />
      <div className="relative flex h-[888px] shrink-0 flex-col">
        <MeetHeader />
        <AcrobatWindow />
        <div className="absolute bottom-6 left-6 flex h-12 w-[362px] items-center rounded bg-[#202124] pl-6 font-[Roboto] text-[14px] tracking-[0.19px] text-white shadow-lg">
          JAVIER OJEDA BAENA ha abandonado la reunión
        </div>
      </div>
      <CallBar />
    </div>
  );
}
